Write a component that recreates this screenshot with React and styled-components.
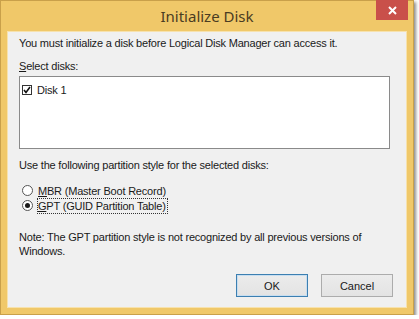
import styled, { createGlobalStyle } from "styled-components";

const GlobalStyle = createGlobalStyle`
  html, body {
    margin: 0;
    padding: 0;
    background: #ffffff;
  }
  body {
    font-family: "Liberation Sans", Arial, sans-serif;
  }
`;

const Window = styled.div`
  width: 412px;
  height: 313px;
  background: #f0c869;
  border: 1px solid #c9a04a;
  box-shadow: 2px 2px 3px rgba(0, 0, 0, 0.45);
  display: flex;
  flex-direction: column;
`;

const TitleBar = styled.div`
  height: 30px;
  display: grid;
  grid-template-columns: 1fr auto 1fr;
  align-items: start;
`;

const Title = styled.div`
  grid-column: 2;
  font-family: "Noto Sans", sans-serif;
  font-size: 15px;
  line-height: 30px;
  color: #4a3c22;
`;

const CloseButton = styled.button`
  grid-column: 3;
  justify-self: end;
  margin-right: 5px;
  width: 32px;
  height: 20px;
  border: 0;
  padding: 0;
  background: #c9504a;
  display: flex;
  align-items: center;
  justify-content: center;
  margin-top: -1px;
`;

const Content = styled.div`
  flex: 1;
  margin: 0 6px 6px 6px;
  background: #f0f0f0;
  border: 1px solid #f7e2ad;
  padding: 4px 12px 0 11px;
  font-size: 11px;
  line-height: 14px;
  letter-spacing: -0.2px;
  color: #1a1a1a;
  display: flex;
  flex-direction: column;
`;

const Text = styled.div`
  margin-top: ${(p) => p.$top || 0}px;
`;

const Hot = styled.span`
  text-decoration: underline;
`;

const ListBox = styled.div`
  box-sizing: border-box;
  margin-top: 3px;
  margin-right: 4px;
  height: 73px;
  background: #ffffff;
  border: 1px solid #8a8a8a;
  padding: 5px 2px;
`;

const Option = styled.label`
  display: flex;
  align-items: center;
  gap: 5px;
  height: 15px;
  margin-top: ${(p) => p.$top || 0}px;
`;

const CheckBox = styled.span`
  width: 8px;
  height: 8px;
  border: 1px solid #333333;
  background: #ffffff;
  display: flex;
  align-items: center;
  justify-content: center;
`;

const Radio = styled.span`
  width: 9px;
  height: 9px;
  border-radius: 50%;
  border: 1px solid #555555;
  background: #ffffff;
  display: flex;
  align-items: center;
  justify-content: center;
  margin-left: 3px;

  &::after {
    content: "";
    width: 5px;
    height: 5px;
    border-radius: 50%;
    background: ${(p) => (p.$on ? "#1a1a1a" : "transparent")};
  }
`;

const Focus = styled.span`
  outline: 1px dotted #333333;
  outline-offset: 0;
  padding-right: 1px;
`;

const Buttons = styled.div`
  margin-top: 16px;
  display: flex;
  justify-content: flex-end;
  gap: 13px;
  padding-right: 1px;
`;

const Button = styled.button`
  width: 72px;
  height: 23px;
  font-family: inherit;
  font-size: 11px;
  color: #1a1a1a;
  background: linear-gradient(#ececec, #e3e3e3);
  border: 1px solid ${(p) => (p.$default ? "#3c7fb1" : "#acacac")};
  box-shadow: ${(p) => (p.$default ? "inset 0 0 0 1px #c8def0" : "none")};
  padding: 0;
`;

export default function App() {
  return (
    <>
      <GlobalStyle />
      <Window>
        <TitleBar>
          <Title>Initialize Disk</Title>
          <CloseButton aria-label="Close">
            <svg width="9" height="9" viewBox="0 0 9 9">
              <path d="M1 1 L8 8 M8 1 L1 8" stroke="#ffffff" strokeWidth="2" />
            </svg>
          </CloseButton>
        </TitleBar>
        <Content>
          <Text>You must initialize a disk before Logical Disk Manager can access it.</Text>
          <Text $top={9}>
            <Hot>S</Hot>elect disks:
          </Text>
          <ListBox>
            <Option>
              <CheckBox>
                <svg width="8" height="8" viewBox="0 0 8 8">
                  <path d="M1 4 L3 6.5 L7 1" stroke="#111" strokeWidth="1.6" fill="none" />
                </svg>
              </CheckBox>
              Disk 1
            </Option>
          </ListBox>
          <Text $top={9}>Use the following partition style for the selected disks:</Text>
          <Option $top={11}>
            <Radio />
            <span>
              <Hot>M</Hot>BR (Master Boot Record)
            </span>
          </Option>
          <Option>
            <Radio $on />
            <Focus>
              <Hot>G</Hot>PT (GUID Partition Table)
            </Focus>
          </Option>
          <Text $top={17}>
            Note: The GPT partition style is not recognized by all previous versions of
            <br />
            Windows.
          </Text>
          <Buttons>
            <Button $default>OK</Button>
            <Button>Cancel</Button>
          </Buttons>
        </Content>
      </Window>
    </>
  );
}
